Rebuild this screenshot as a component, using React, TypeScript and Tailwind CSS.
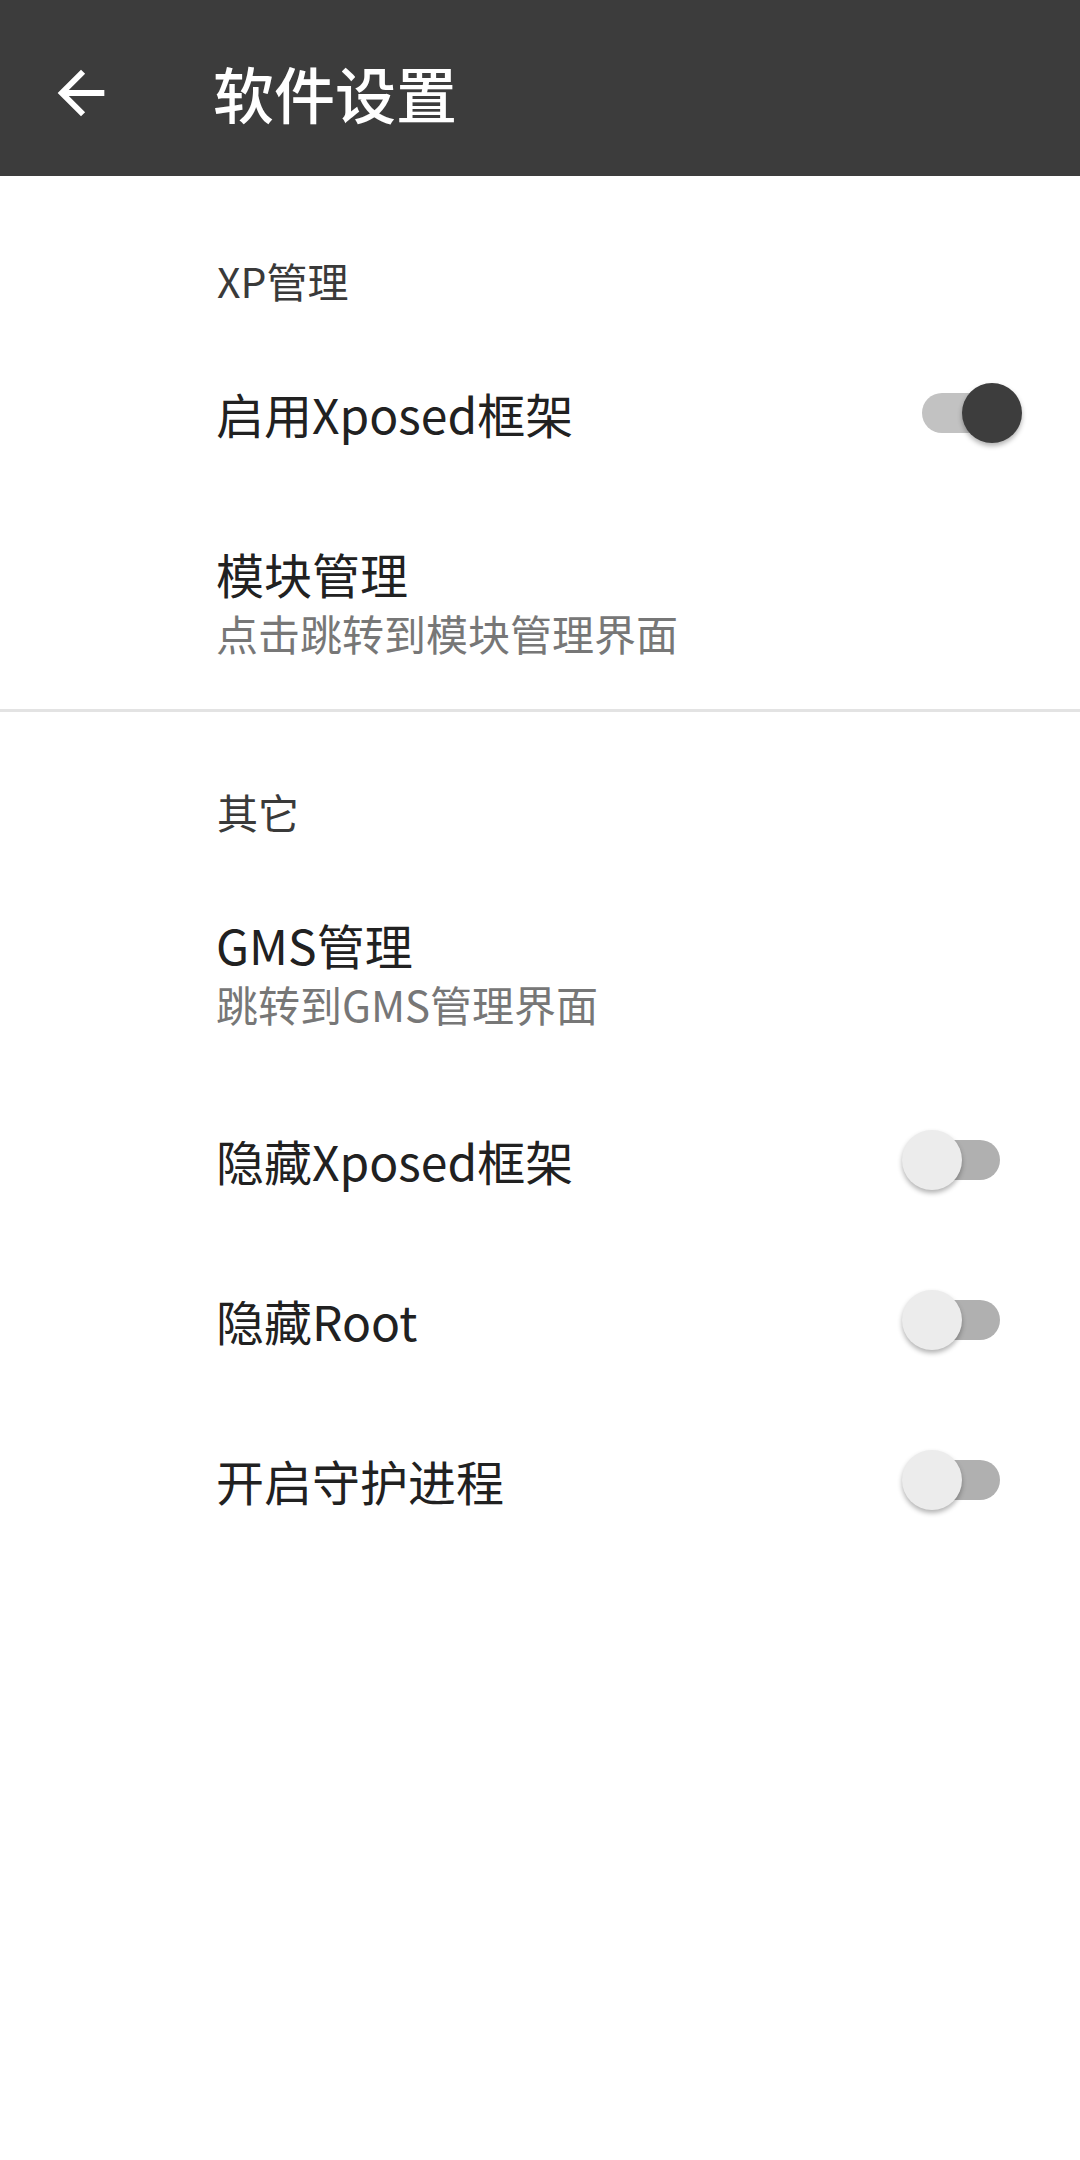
import { useState } from 'react';

function Toggle({ on, onChange }: { on: boolean; onChange: () => void }) {
  return (
    <button onClick={onChange} className="relative w-[120px] h-[64px] shrink-0">
      <span
        className={
          on
            ? 'absolute left-[20px] top-[12px] w-[80px] h-[40px] rounded-full bg-[#c2c2c2]'
            : 'absolute left-[18px] top-[12px] w-[80px] h-[40px] rounded-full bg-[#b0b0b0]'
        }
      />
      <span
        className={
          on
            ? 'absolute left-[60px] top-[2px] w-[60px] h-[60px] rounded-full bg-[#3d3d3d] shadow-[0_3px_5px_rgba(0,0,0,0.3)]'
            : 'absolute left-0 top-[2px] w-[60px] h-[60px] rounded-full bg-[#ececec] shadow-[0_3px_5px_rgba(0,0,0,0.3)]'
        }
      />
    </button>
  );
}

function Category({ title, first }: { title: string; first?: boolean }) {
  return (
    <div
      className={
        first
          ? 'pl-[217px] pt-[84px] pb-[33px] text-[41px] leading-[40px] text-[#3a3a3a]'
          : 'pl-[217px] pt-[79px] pb-[33px] text-[41px] leading-[40px] text-[#3a3a3a]'
      }
    >
      {title}
    </div>
  );
}

function SwitchRow({ title, on, onChange }: { title: string; on: boolean; onChange: () => void }) {
  return (
    <div className="h-[160px] flex items-center justify-between pl-[216px] pr-[58px]">
      <span className="text-[48px] leading-[56px] text-[#212121]">{title}</span>
      <Toggle on={on} onChange={onChange} />
    </div>
  );
}

function LinkRow({ title, summary }: { title: string; summary: string }) {
  return (
    <div className="pl-[216px] pr-[58px] pt-[52px] pb-[50px]">
      <div className="text-[48px] leading-[56px] text-[#212121]">{title}</div>
      <div className="mt-[6px] text-[42px] leading-[52px] text-[#777777]">{summary}</div>
    </div>
  );
}

export default function App() {
  const [xposed, setXposed] = useState(true);
  const [hideXposed, setHideXposed] = useState(false);
  const [hideRoot, setHideRoot] = useState(false);
  const [daemon, setDaemon] = useState(false);

  return (
    <div className="w-[1080px] min-h-[2160px] bg-white font-['Noto_Sans_CJK_SC','Noto_Sans',sans-serif]">
      <div className="h-[176px] bg-[#3c3c3c] flex items-center pt-[10px] pl-[46px]">
        <svg viewBox="0 0 24 24" className="w-[70px] h-[70px]" fill="#ffffff">
          <path d="M20 11H7.83l5.59-5.59L12 4l-8 8 8 8 1.41-1.41L7.83 13H20v-2z" />
        </svg>
        <h1 className="ml-[97px] text-[61px] leading-[72px] font-medium text-white">软件设置</h1>
      </div>

      <Category title="XP管理" first />
      <SwitchRow title="启用Xposed框架" on={xposed} onChange={() => setXposed(!xposed)} />
      <LinkRow title="模块管理" summary="点击跳转到模块管理界面" />

      <div className="h-[3px] bg-[#e3e3e3]" />

      <Category title="其它" />
      <LinkRow title="GMS管理" summary="跳转到GMS管理界面" />
      <SwitchRow title="隐藏Xposed框架" on={hideXposed} onChange={() => setHideXposed(!hideXposed)} />
      <SwitchRow title="隐藏Root" on={hideRoot} onChange={() => setHideRoot(!hideRoot)} />
      <SwitchRow title="开启守护进程" on={daemon} onChange={() => setDaemon(!daemon)} />
    </div>
  );
}
